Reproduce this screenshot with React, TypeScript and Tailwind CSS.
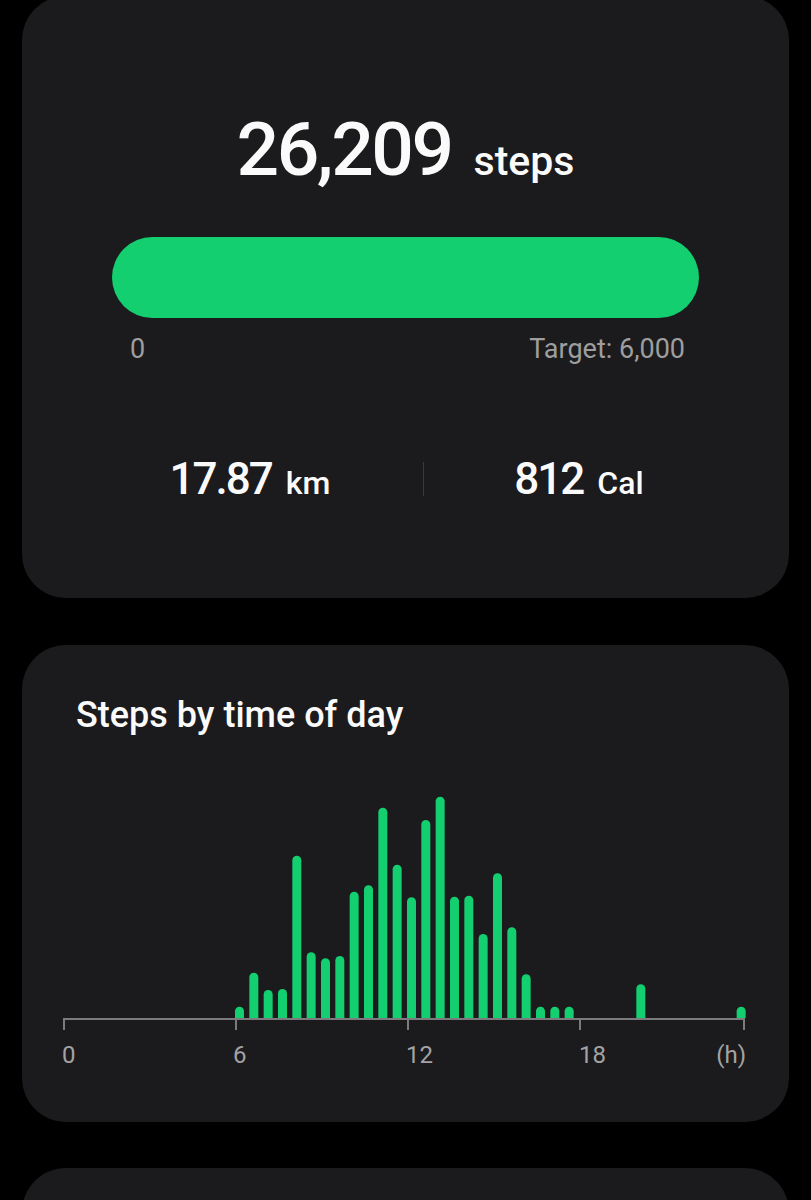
import React from "react";

const bars: [number, number][] = [
  [12, 11.3],
  [13, 45.3],
  [14, 28],
  [15, 29],
  [16, 162.3],
  [17, 65.7],
  [18, 59.7],
  [19, 62],
  [20, 126.3],
  [21, 132.7],
  [22, 210.3],
  [23, 153.3],
  [24, 120.7],
  [25, 198],
  [26, 221.3],
  [27, 121.3],
  [28, 122.3],
  [29, 84],
  [30, 144.7],
  [31, 90.7],
  [32, 43.7],
  [33, 11.3],
  [34, 11.3],
  [35, 11.3],
  [40, 33.7],
  [47, 11.3],
];

function barPath(k: number, h: number) {
  const base = 1017;
  const w = 9;
  const r = w / 2;
  const x = 63 + k * 14.333;
  const top = base - h;
  return `M${x},${base} V${top + r} A${r},${r} 0 0 1 ${x + w},${top + r} V${base} Z`;
}

function Chart() {
  const ticks = [64, 236, 408, 580, 744];
  return (
    <svg
      width={767}
      height={300}
      viewBox="22 780 767 300"
      className="block mt-[48px]"
    >
      {bars.map(([k, h]) => (
        <path key={k} d={barPath(k, h)} fill="#13cf70" />
      ))}
      <line x1={64} y1={1018} x2={744} y2={1018} stroke="#7b7b7d" strokeWidth={2} />
      {ticks.map((t) => (
        <line key={t} x1={t} y1={1017} x2={t} y2={1029} stroke="#7b7b7d" strokeWidth={2} />
      ))}
      <g fill="#a3a3a5" fontSize={24} fontFamily="Roboto, sans-serif">
        <text x={62} y={1062}>0</text>
        <text x={233} y={1062}>6</text>
        <text x={406} y={1062}>12</text>
        <text x={579} y={1062}>18</text>
        <text x={746} y={1062} textAnchor="end">(h)</text>
      </g>
    </svg>
  );
}

export default function App() {
  return (
    <div className="bg-black h-[1200px] overflow-hidden px-[22px] font-['Roboto',sans-serif]">
      <div className="-mt-1 h-[602px] rounded-[44px] bg-[#1b1b1d] pt-[116px]">
        <div className="h-[75px] flex justify-center items-baseline gap-[22px] text-[#fafafa] font-medium">
          <span className="text-[75px] leading-[75px] tracking-[-2.5px]">26,209</span>
          <span className="text-[41px] leading-[41px]">steps</span>
        </div>
        <div className="mt-[50px] mx-[90px] h-[81px] rounded-full bg-[#13cf70]" />
        <div className="mt-[18px] ml-[108px] mr-[104px] flex justify-between text-[27px] leading-[27px] text-[#9e9e9f]">
          <span>0</span>
          <span>Target: 6,000</span>
        </div>
        <div className="mt-[94px] mx-[55px] h-[44px] grid grid-cols-[346px_1px_1fr] items-center text-[#fafafa] font-medium">
          <div className="flex justify-center items-baseline gap-[14px]">
            <span className="text-[44px] leading-[44px] tracking-[-2px]">17.87</span>
            <span className="text-[32px] leading-[32px]">km</span>
          </div>
          <div className="w-px h-[34px] bg-[#3a3a3c]" />
          <div className="flex justify-center items-baseline gap-[14px]">
            <span className="text-[44px] leading-[44px] tracking-[-2px]">812</span>
            <span className="text-[32px] leading-[32px]">Cal</span>
          </div>
        </div>
      </div>

      <div className="mt-[47px] h-[477px] rounded-[44px] bg-[#1b1b1d] pt-[52px]">
        <div className="pl-[54px] text-[36px] leading-[36px] font-medium text-[#fafafa]">
          Steps by time of day
        </div>
        <Chart />
      </div>

      <div className="mt-[46px] h-[200px] rounded-t-[44px] bg-[#1b1b1d]" />
    </div>
  );
}
